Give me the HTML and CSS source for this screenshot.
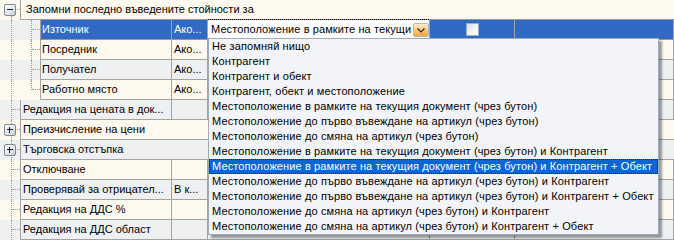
FILE: index.html
```html
<!DOCTYPE html>
<html>
<head>
<meta charset="utf-8">
<link rel="stylesheet" href="styles.css">
</head>
<body>
<div class="grid">
  <div class="row cream">
    <div class="gut top"><span class="exp minus"></span></div>
    <div class="cell cat hdr">Запомни последно въведените стойности за</div>
  </div>
  <div class="row gray sel">
    <div class="gut pass"></div>
    <div class="gut2"></div>
    <div class="cell name child">Източник</div>
    <div class="cell val">Ако...</div>
    <div class="cell edit">
      <span class="etext">Местоположение в рамките на текущи</span>
      <span class="ddbtn"><svg width="16" height="14" viewBox="0 0 16 14"><defs><linearGradient id="og" x1="0" y1="0" x2="0" y2="1"><stop offset="0" stop-color="#fff1d2"/><stop offset="0.5" stop-color="#fdc979"/><stop offset="1" stop-color="#f6a23a"/></linearGradient></defs><rect x="0.5" y="0.5" width="15" height="13" rx="1.5" fill="url(#og)" stroke="#b3b8c1"/><path d="M4.5 5.5 L8 9 L11.5 5.5" fill="none" stroke="#222" stroke-width="1.1"/></svg></span>
    </div>
    <div class="cell chk"><span class="cb"></span></div>
    <div class="cell rest"></div>
  </div>
  <div class="row cream">
    <div class="gut pass"></div>
    <div class="gut2"></div>
    <div class="cell name child">Посредник</div>
    <div class="cell val">Ако...</div>
    <div class="cell edit"></div>
    <div class="cell chk"></div>
    <div class="cell rest"></div>
  </div>
  <div class="row gray">
    <div class="gut pass"></div>
    <div class="gut2"></div>
    <div class="cell name child">Получател</div>
    <div class="cell val">Ако...</div>
    <div class="cell edit"></div>
    <div class="cell chk"></div>
    <div class="cell rest"></div>
  </div>
  <div class="row cream">
    <div class="gut pass"></div>
    <div class="gut2 last"></div>
    <div class="cell name child">Работно място</div>
    <div class="cell val">Ако...</div>
    <div class="cell edit"></div>
    <div class="cell chk"></div>
    <div class="cell rest"></div>
  </div>
  <div class="row gray">
    <div class="gut"></div>
    <div class="cell name">Редакция на цената в док...</div>
    <div class="cell val"></div>
    <div class="cell edit"></div>
    <div class="cell chk"></div>
    <div class="cell rest"></div>
  </div>
  <div class="row cream">
    <div class="gut"><span class="exp plus"></span></div>
    <div class="cell cat">Преизчисление на цени</div>
  </div>
  <div class="row gray">
    <div class="gut"><span class="exp plus"></span></div>
    <div class="cell cat">Търговска отстъпка</div>
  </div>
  <div class="row cream">
    <div class="gut"></div>
    <div class="cell name">Отключване</div>
    <div class="cell val"></div>
    <div class="cell edit"></div>
    <div class="cell chk"></div>
    <div class="cell rest"></div>
  </div>
  <div class="row gray">
    <div class="gut"></div>
    <div class="cell name">Проверявай за отрицател...</div>
    <div class="cell val">В к...</div>
    <div class="cell edit"></div>
    <div class="cell chk"></div>
    <div class="cell rest"></div>
  </div>
  <div class="row cream">
    <div class="gut"></div>
    <div class="cell name">Редакция на ДДС %</div>
    <div class="cell val"></div>
    <div class="cell edit"></div>
    <div class="cell chk"></div>
    <div class="cell rest"></div>
  </div>
  <div class="row gray">
    <div class="gut"></div>
    <div class="cell name">Редакция на ДДС област</div>
    <div class="cell val"></div>
    <div class="cell edit"></div>
    <div class="cell chk"></div>
    <div class="cell rest"></div>
  </div>
</div>

<ul class="list">
  <li>Не запомняй нищо</li>
  <li>Контрагент</li>
  <li>Контрагент и обект</li>
  <li>Контрагент, обект и местоположение</li>
  <li>Местоположение в рамките на текущия документ (чрез бутон)</li>
  <li>Местоположение до първо въвеждане на артикул (чрез бутон)</li>
  <li>Местоположение до смяна на артикул (чрез бутон)</li>
  <li>Местоположение в рамките на текущия документ (чрез бутон) и Контрагент</li>
  <li class="on">Местоположение в рамките на текущия документ (чрез бутон) и Контрагент + Обект</li>
  <li>Местоположение до първо въвеждане на артикул (чрез бутон) и Контрагент</li>
  <li>Местоположение до първо въвеждане на артикул (чрез бутон) и Контрагент + Обект</li>
  <li>Местоположение до смяна на артикул (чрез бутон) и Контрагент</li>
  <li>Местоположение до смяна на артикул (чрез бутон) и Контрагент + Обект</li>
</ul>
</body>
</html>
```

FILE: styles.css
```css
* { box-sizing: border-box; }
html, body { margin: 0; padding: 0; }
body {
  width: 674px;
  height: 240px;
  overflow: hidden;
  position: relative;
  background: #fff;
  color: #000;
  font-family: "Liberation Sans", Arial, sans-serif;
  font-size: 11px;
}

.grid { display: flex; flex-direction: column; }
.row { display: flex; height: 20px; position: relative; }
.cream { background: #fef9ef; }
.gray { background: #eff0f2; }

/* tree gutters */
.gut, .gut2 { width: 20px; flex: none; position: relative; }
.gut::before, .gut2::before {
  content: "";
  position: absolute;
  left: 11px; top: 0; bottom: 0;
  border-left: 1px dotted #9c9c9c;
}
.gut::after, .gut2::after {
  content: "";
  position: absolute;
  left: 12px; top: 9px; width: 8px;
  border-top: 1px dotted #9c9c9c;
}
.gut.top::before { top: 16px; }
.gut.pass::after { display: none; }
.gut2.last::before { bottom: 10px; }

.exp {
  position: absolute;
  left: 4px; top: 4px;
  width: 12px; height: 12px;
  border: 1px solid #7d8796;
  border-radius: 2px;
  background: linear-gradient(135deg, #ffffff 0%, #e9ecf1 50%, #c3c9d3 100%);
  z-index: 1;
}
.exp::before {
  content: "";
  position: absolute;
  left: 2px; top: 4px; width: 6px; height: 1px;
  background: #1c1c1c;
}
.exp.plus::after {
  content: "";
  position: absolute;
  left: 4px; top: 2px; width: 1px; height: 6px;
  background: #1c1c1c;
}

/* cells */
.cell {
  height: 20px;
  border-bottom: 1px solid #a3a3a3;
  border-right: 1px solid #a3a3a3;
  line-height: 19px;
  padding: 0 2px;
  white-space: nowrap;
  overflow: hidden;
  flex: none;
}
.name { width: 152px; border-left: 1px solid #a3a3a3; }
.name.child { width: 132px; padding-left: 1px; }
.val { width: 36px; padding-left: 2px; }
.edit { width: 222px; }
.chk { width: 85px; }
.rest { flex: 1; }
.cat { flex: 1; border-left: 1px solid #a3a3a3; border-right: none; }
.hdr { padding-left: 5px; }

/* selected row */
.sel .cell { background: #316ac5; color: #fff; }
.sel .edit {
  background: #fff;
  color: #000;
  display: flex;
  align-items: center;
  padding: 0 2px 0 3px;
  overflow: visible;
  position: relative;
}
.etext { flex: 1; white-space: nowrap; letter-spacing: 0.1px; }
.ddbtn { flex: none; display: flex; margin-left: 2px; }
.sel .edit::before {
  content: "";
  position: absolute;
  left: 0; right: 0; top: -1px;
  border-top: 1px dotted #000;
  z-index: 2;
}
.sel::after {
  content: "";
  position: absolute;
  left: 40px; right: 0; top: -1px; bottom: 0;
  border-top: 1px dotted #b8893f;
  border-bottom: 1px dotted #b8893f;
  z-index: 1;
  pointer-events: none;
}
.sel .chk { display: flex; align-items: center; justify-content: center; }
.cb {
  width: 13px; height: 13px;
  border: 1px solid #9badc4;
  background: linear-gradient(135deg, #d9dde5 0%, #f4f5f7 60%, #ffffff 100%);
}

/* dropdown list */
.list {
  position: absolute;
  left: 208px; top: 38px;
  width: 451px; height: 197px;
  margin: 0; padding: 0;
  list-style: none;
  background: #f3f4f7;
  border: 1px solid #a0abb9;
  box-shadow: 3px 3px 2px rgba(0, 0, 0, 0.38);
  z-index: 5;
}
.list li {
  height: 15px;
  line-height: 15px;
  padding-left: 3px;
  white-space: nowrap;
  overflow: hidden;
  letter-spacing: 0.12px;
}
.list li.on {
  background: #0b66d5;
  color: #fff;
  outline: 1px dotted #1b1b1b;
  outline-offset: -1px;
}
```
